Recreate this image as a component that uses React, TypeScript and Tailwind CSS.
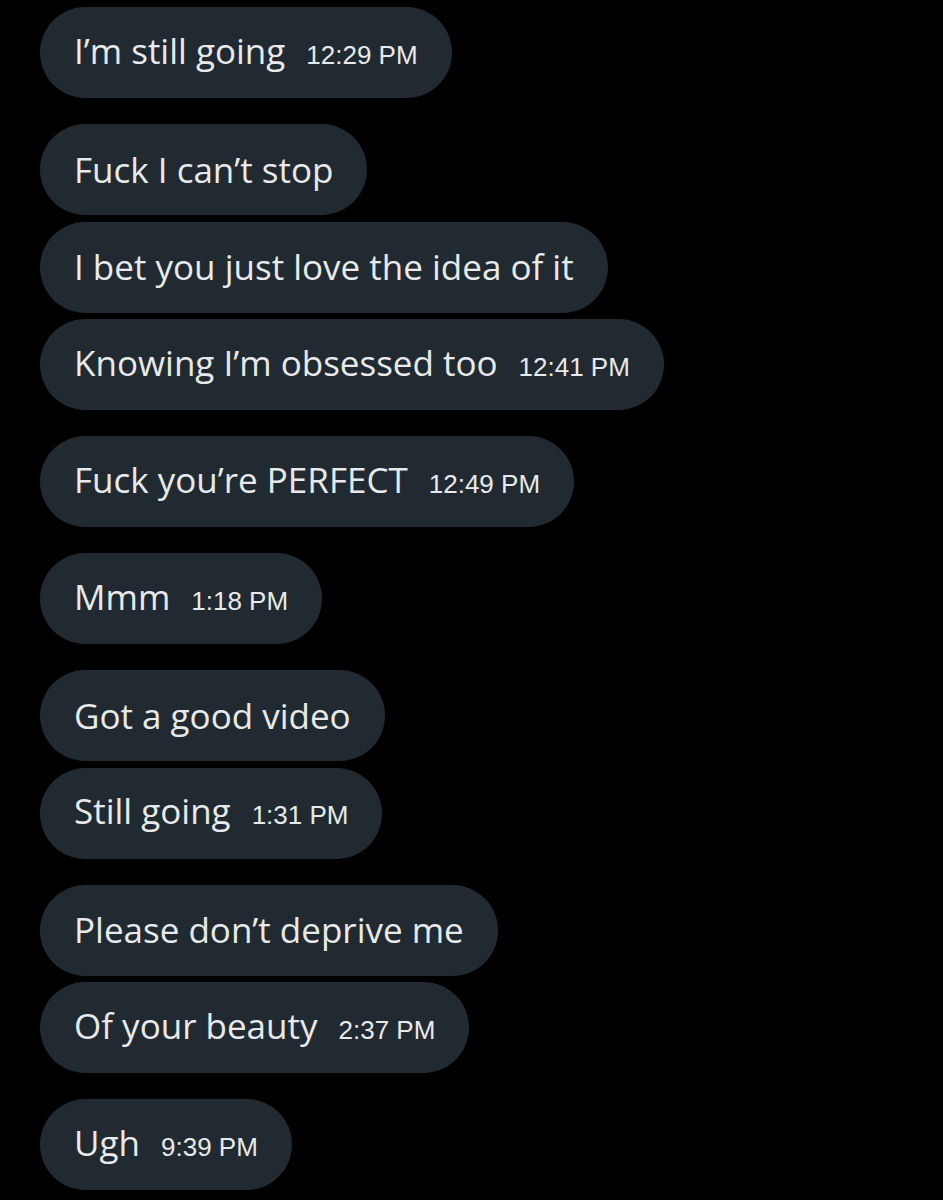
type Msg = { text: string; time?: string };

const groups: Msg[][] = [
  [{ text: "I’m still going", time: "12:29 PM" }],
  [
    { text: "Fuck I can’t stop" },
    { text: "I bet you just love the idea of it" },
    { text: "Knowing I’m obsessed too", time: "12:41 PM" },
  ],
  [{ text: "Fuck you’re PERFECT", time: "12:49 PM" }],
  [{ text: "Mmm", time: "1:18 PM" }],
  [{ text: "Got a good video" }, { text: "Still going", time: "1:31 PM" }],
  [{ text: "Please don’t deprive me" }, { text: "Of your beauty", time: "2:37 PM" }],
  [{ text: "Ugh", time: "9:39 PM" }],
];

function Bubble({ text, time }: Msg) {
  return (
    <div className="flex h-[91px] w-fit items-center rounded-full bg-[#222a31] px-[34px]">
      <div className="flex items-baseline gap-[21px]">
        <span className="font-['Open_Sans',sans-serif] text-[35px] leading-[40px] text-[#e7e9ea]">
          {text}
        </span>
        {time && (
          <span className="font-['Liberation_Sans',Arial,sans-serif] text-[26px] text-[#e7e9ea]">
            {time}
          </span>
        )}
      </div>
    </div>
  );
}

export default function App() {
  return (
    <div className="min-h-[1200px] w-full bg-black pl-[40px] pt-[7px]">
      <div className="flex flex-col gap-[26px]">
        {groups.map((group, i) => (
          <div key={i} className="flex flex-col gap-[6.5px]">
            {group.map((m, j) => (
              <Bubble key={j} {...m} />
            ))}
          </div>
        ))}
      </div>
    </div>
  );
}
